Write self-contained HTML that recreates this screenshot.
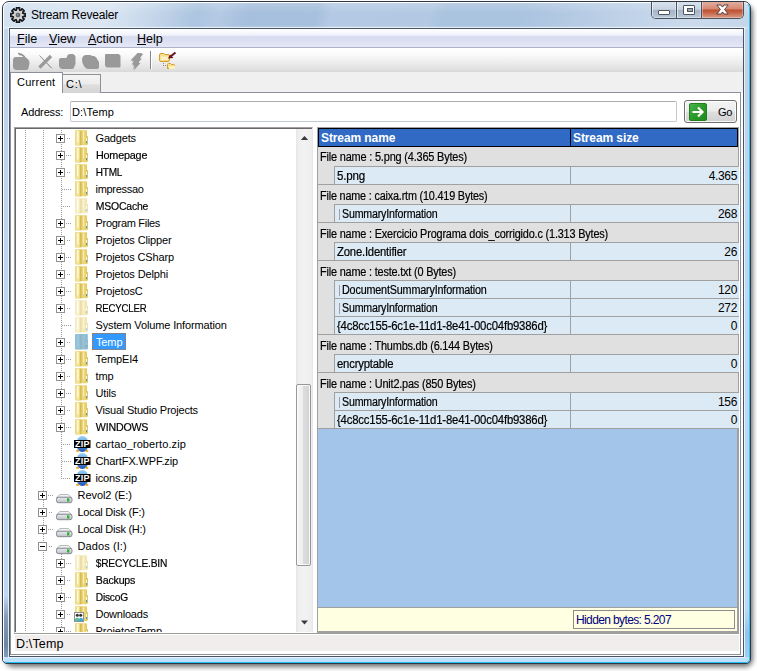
<!DOCTYPE html>
<html lang="en">
<head>
<meta charset="utf-8">
<title>Stream Revealer</title>
<style>
html,body{margin:0;padding:0;background:#fff;}
body{width:757px;height:671px;position:relative;overflow:hidden;font-family:"Liberation Sans",sans-serif;font-size:11px;color:#000;}
div,span,svg,i,b{position:absolute;box-sizing:border-box;}
svg{overflow:visible;}
#shadow{left:5px;top:5px;width:748px;height:662px;border-radius:8px;background:rgba(0,0,0,.55);filter:blur(2.5px);}
#win{left:2px;top:1px;width:749px;height:663px;border:1px solid #2f3846;border-radius:7px 7px 5px 5px;background:linear-gradient(180deg,#cbdcee 0px,#c3d5ea 27px,#bed2e9 60px,#bdd8f4 300px,#bdd8f4 600px,#bcdaf6 640px,#bfe0fb 656px,#bfe0fb 100%);overflow:hidden;}
#win .whl{left:0;top:0;right:0;bottom:0;border:1px solid #fff;border-right-color:#35c2f2;border-bottom-color:#25bdf0;border-radius:6px 6px 4px 4px;}
#titlegl{left:1px;top:1px;width:745px;height:26px;background:linear-gradient(180deg,rgba(255,255,255,.18) 0,rgba(255,255,255,0) 40%,rgba(255,255,255,0) 85%,rgba(255,255,255,.25) 100%),linear-gradient(105deg,#d3e1f0 0,#dbe6f2 14%,#c6d7eb 20%,#acc5e0 26%,#b4cae4 29%,#a6bfdd 33%,#a7c0dd 42%,#b4cae4 44%,#b3c9e3 57%,#aac3df 59%,#aac3df 69%,#c2d4e9 85%,#cbdbed 92%,#c4d6ea 100%);}
#client{left:9px;top:28px;width:735px;height:629px;border:1px solid #4a5564;background:#fff;}
#clienthl{left:8px;top:27px;width:737px;height:631px;border:1px solid rgba(236,243,250,.9);}
#title{left:31px;top:8px;font-size:12px;line-height:14px;white-space:nowrap;letter-spacing:-0.2px;}
/* menu */
#menu{left:10px;top:29px;width:733px;height:19px;background:linear-gradient(180deg,#ffffff 0,#f6f8fd 20%,#edf0fa 36%,#d7dcf0 40%,#dce0f2 70%,#e4e8f6 100%);border-bottom:1px solid #adb2ca;}
#menu span{top:3px;font-size:12.5px;line-height:15px;white-space:nowrap;}
#menu span u{text-decoration:underline;text-underline-offset:1px;text-decoration-thickness:1px;}
#tb{left:10px;top:48px;width:733px;height:24px;background:linear-gradient(180deg,#ffffff 0,#fbfbfb 25%,#efefef 55%,#e2e2e2 85%,#d9d9d9 100%);}
#tabbar{left:10px;top:72px;width:733px;height:21px;background:#f0f0f0;}
.tt{white-space:nowrap;line-height:14px;height:16px;padding:1px 0 0 4px;font-size:11px;}
.tt.sel{background:#3399ff;color:#fff;outline:1px dotted #c8702a;outline-offset:-1px;}
.vl{width:1px;background-image:linear-gradient(180deg,#9a9a9a 50%,transparent 50%);background-size:1px 2px;}
.hl{height:1px;background-image:linear-gradient(90deg,#9a9a9a 50%,transparent 50%);background-size:2px 1px;}
.bx{width:9px;height:9px;border:1px solid #919191;background:#fff;}
.bx i{left:1px;top:3px;width:5px;height:1px;background:#000;}
.bx b{left:3px;top:1px;width:1px;height:5px;background:#000;}
.ic{overflow:visible;}
.zt{font:bold 9px "Liberation Sans",sans-serif;fill:#fff;letter-spacing:0.2px;}
#tree{left:0;top:0;width:313px;height:632px;overflow:hidden;clip-path:inset(129px 0 0 16px);}
#treeborder{left:14px;top:127px;width:299px;height:506px;border:1px solid #a0a0a0;border-right-color:#e8e8e8;border-bottom-color:#fff;}
#treeborder2{left:15px;top:128px;width:297px;height:504px;border:1px solid #696969;border-right:0;border-bottom:0;}
#sb{left:296px;top:129px;width:16px;height:503px;background:linear-gradient(90deg,#e6e6e6 0,#f0f0f0 20%,#f2f2f2 60%,#ededed 100%);}
#thumb{left:0;top:255px;width:15px;height:182px;border:1px solid #979797;border-radius:2px;background:linear-gradient(90deg,#f5f5f5 0,#eeeeee 45%,#dcdcde 50%,#d3d3d6 100%);box-shadow:inset 0 0 0 1px rgba(255,255,255,.8);}
#grid{left:317px;top:0;width:422px;height:633px;}
.rf{left:0;width:421px;background:#e0e0e0;border-top:1px solid #a0a0a0;border-left:1px solid #a0a0a0;}
.rf span{left:2px;top:4px;font-size:12px;line-height:14px;white-space:nowrap;}
.rc{left:0;width:421px;background:#e0e0e0;border-left:1px solid #a0a0a0;}
.rc .c1{left:16px;top:0;width:236px;height:100%;background:#dbeaf5;border-top:1px solid #a0a0a0;border-left:1px solid #a0a0a0;}
.rc .c2{left:252px;top:0;width:169px;height:100%;background:#dbeaf5;border-top:1px solid #a0a0a0;border-left:1px solid #a0a0a0;}
.rc .c1 span{left:2px;top:2px;font-size:12px;line-height:14px;white-space:nowrap;}
.rc .c1 span.b{left:7px;}
.rc .c1 i.bar{left:4px;top:4px;width:1px;height:11px;background:#a59aa0;}
.rc .c2 span{right:2px;top:2px;font-size:12px;line-height:14px;white-space:nowrap;letter-spacing:-0.35px;}

#capbtns{left:651px;top:2px;width:93px;height:17px;border:1px solid #48525f;border-top:0;border-radius:0 0 5px 5px;overflow:hidden;background:#b8c6d8;}
#bmin{left:0;top:0;width:25px;height:16px;background:linear-gradient(180deg,#d9e3ee 0,#c6d2e1 46%,#a5b4c7 52%,#b9c7d8 100%);border-right:1px solid #48525f;box-shadow:inset 1px 0 0 rgba(255,255,255,.6),inset -1px -1px 0 rgba(255,255,255,.35);}
#bmin i{left:6px;top:8px;width:12px;height:5px;background:#fff;border:1px solid #4d5560;border-radius:1px;}
#bmax{left:25px;top:0;width:25px;height:16px;background:linear-gradient(180deg,#d9e3ee 0,#c6d2e1 46%,#a5b4c7 52%,#b9c7d8 100%);border-right:1px solid #48525f;box-shadow:inset 1px 0 0 rgba(255,255,255,.6),inset -1px -1px 0 rgba(255,255,255,.35);}
#bmax i{left:6px;top:3px;width:12px;height:10px;border:1px solid #4d5560;background:#fff;border-radius:1px;}
#bmax i:after{content:'';position:absolute;left:3px;top:2px;width:4px;height:2px;border:1px solid #4d5560;background:#9aa8ba;}
#bclose{left:50px;top:0;width:41px;height:16px;background:linear-gradient(180deg,#e2ae9f 0,#d78973 42%,#bf5334 50%,#c25c3e 62%,#d1836b 85%,#db9a86 100%);box-shadow:inset 1px 0 0 rgba(255,255,255,.35),inset -1px -1px 0 rgba(255,255,255,.3);}
#tab1{left:10px;top:72px;width:53px;height:21px;background:#fff;border:1px solid #8c909b;border-bottom:0;}
#tab1 span{left:6px;top:3px;font-size:11px;line-height:13px;letter-spacing:.25px;}
#tab2{left:62px;top:74px;width:39px;height:19px;border:1px solid #8e9096;border-bottom:0;background:linear-gradient(180deg,#f4f4f4 0,#ececec 50%,#dedede 55%,#d4d4d4 100%);}
#tab2 span{left:3px;top:3px;font-size:11px;line-height:13px;letter-spacing:.8px;}
#page{left:10px;top:92px;width:731px;height:563px;border:1px solid #8c909b;background:#fff;}
#addrlbl{left:21px;top:106px;font-size:11px;line-height:13px;letter-spacing:-0.15px;}
#addr{left:70px;top:101px;width:607px;height:21px;border:1px solid #c3c9d3;border-top-color:#abadb3;border-radius:2px;background:#fff;}
#addr span{left:1px;top:4px;font-size:11px;line-height:13px;letter-spacing:.15px;}
#go{left:684px;top:100px;width:53px;height:23px;border:1px solid #707070;border-radius:3px;background:linear-gradient(180deg,#f3f3f3 0,#ececec 48%,#dedede 52%,#d1d1d1 100%);box-shadow:inset 0 0 0 1px rgba(255,255,255,.8);}
#go span{left:33px;top:5px;font-size:11px;line-height:13px;letter-spacing:-0.4px;}
#gridbg{left:317px;top:127px;width:422px;height:506px;background:#a3c5ea;border:1px solid #a0a0a0;border-right-width:2px;border-bottom-width:2px;}
#ghead{left:318px;top:128px;width:420px;height:19px;background:#316ac5;border:1px solid #000;}
#ghead span{top:2px;color:#fff;font-weight:bold;font-size:12px;line-height:14px;white-space:nowrap;letter-spacing:-0.1px;}
#ghead i{left:251px;top:0;width:1px;height:17px;background:#000;}
#gfoot{left:318px;top:607px;width:419px;height:24px;background:#ffffe1;border-top:1px solid #a0a0a0;}
#hb{left:255px;top:2px;width:162px;height:19px;border:1px solid #8c8c8c;}
#hb span{left:2px;top:2px;font-size:12px;line-height:14px;white-space:nowrap;letter-spacing:-0.62px;color:#000080;}
#status{left:15px;top:635px;width:724px;height:16px;background:#f0edec;}
#statline{left:14px;top:633px;width:725px;height:1px;background:#9c9c9c;}
#status span{left:1px;top:2px;font-size:12.5px;line-height:14px;letter-spacing:.15px;}
.rend{left:0;width:421px;height:1px;background:#a0a0a0;}
#lfd{left:4px;top:596px;width:5px;height:61px;background:linear-gradient(180deg,rgba(112,136,164,0) 0,rgba(112,136,164,.75) 35%,#6c86a2 80%,#7f9dbb 100%);}
#rfd{left:745px;top:610px;width:4px;height:47px;background:linear-gradient(180deg,rgba(143,192,234,0) 0,#93c2ea 50%,#9fd0f4 100%);}
</style>
</head>
<body>
<svg width="0" height="0" style="left:-10px;top:-10px">
<defs>
<linearGradient id="gf" x1="0" y1="0" x2="1" y2="0"><stop offset="0" stop-color="#f3e7a4"/><stop offset=".45" stop-color="#efdf8e"/><stop offset=".5" stop-color="#dcc566"/><stop offset="1" stop-color="#ecd778"/></linearGradient>
<linearGradient id="gfl" x1="0" y1="0" x2="1" y2="0"><stop offset="0" stop-color="#ecd880"/><stop offset=".5" stop-color="#f3e6a0"/><stop offset="1" stop-color="#e5cc64"/></linearGradient>
<linearGradient id="gfr" x1="0" y1="0" x2="1" y2="0"><stop offset="0" stop-color="#dbbf56"/><stop offset=".4" stop-color="#eedb80"/><stop offset="1" stop-color="#e3c860"/></linearGradient>
<g id="foldf">
 <rect x="1" y="0" width="6" height="15.700" rx="1" fill="url(#gfl)"/>
 <rect x="6.500" y=".3" width="6.500" height="15" rx="1" fill="url(#gfr)"/>
 <rect x="12.500" y="6" width="1.500" height="8.500" rx=".5" fill="#dfc45c"/>
 <rect x="3" y="1" width="1.600" height="11.500" rx=".6" fill="#fffbe6" opacity=".9"/>
 <rect x="9" y="1.500" width="1.200" height="10" rx=".5" fill="#fbf3c8" opacity=".75"/>
 <rect x="6.300" y=".8" width=".9" height="14.400" fill="#cfb552" opacity=".85"/>
 <rect x="12" y="8" width="1" height="3" fill="#fdfdf5"/>
 <rect x="12" y="11" width="1" height="2" fill="#3f9be0"/>
</g>
<g id="foldh" opacity=".5"><use href="#foldf"/></g>
<g id="folds">
 <use href="#foldf"/>
 <rect x="1" y="0" width="13" height="15.500" rx="1" fill="#6db4f2" opacity=".7"/>
</g>
<g id="foldw">
 <use href="#foldf"/>
 <rect x=".5" y="6.500" width="9" height="9" fill="#fdfdfd" stroke="#8e9298" stroke-width="1"/>
 <circle cx="3.300" cy="9.300" r="1.500" fill="#3a3026"/>
 <circle cx="6.700" cy="9.300" r="1.500" fill="#3a3026"/>
 <path d="M1 15 L1 13 Q3.300 10.500 5.200 13 L5.200 15 Z" fill="#5cc08c"/>
 <path d="M5 15 L5 13 Q6.800 10.500 9 13 L9 15 Z" fill="#3aa8e4"/>
</g>
<linearGradient id="gz" x1="0" y1="0" x2="0" y2="1"><stop offset="0" stop-color="#9fd0f2"/><stop offset=".45" stop-color="#5aa0e0"/><stop offset="1" stop-color="#1d55b8"/></linearGradient>
<g id="zipi">
 <ellipse cx="8.400" cy="8" rx="6.100" ry="8" fill="url(#gz)"/>
 <rect x="2.3" y="13.8" width="2.6" height="2" fill="#f0a020"/>
 <rect x="11.6" y="13.8" width="2.6" height="2" fill="#f0a020"/>
 <rect x="0" y="4" width="16.5" height="8" fill="#000"/>
</g>
<linearGradient id="gd" x1="0" y1="0" x2="0" y2="1"><stop offset="0" stop-color="#e8eaee"/><stop offset=".5" stop-color="#d4d7de"/><stop offset="1" stop-color="#b9bcc4"/></linearGradient>
<g id="drv">
 <path d="M4 7.500 L12.500 7.500 L15.500 10.500 L0.500 10.500 Z" fill="#f1f2f4" stroke="#a8aaae" stroke-width=".8"/>
 <rect x=".5" y="10.200" width="15.500" height="5.500" rx="2" fill="url(#gd)" stroke="#85888e" stroke-width="1"/>
 <rect x="11" y="11.300" width="2.400" height="3.200" fill="#38b038"/>
</g>
</defs>
</svg>
<div id="shadow"></div>
<div id="win"><div id="titlegl"></div><div class="whl"></div></div>
<div id="lfd"></div><div id="rfd"></div>
<div id="clienthl"></div>
<div id="client"></div>
<!-- title bar -->
<svg id="appicon" style="left:10px;top:7px" width="16" height="16" viewBox="0 0 16 16">
 <g transform="translate(8 8)">
  <g fill="#15181d">
   <rect x="-2.300" y="-8" width="4.600" height="16" rx=".5"/>
   <rect x="-2.300" y="-8" width="4.600" height="16" rx=".5" transform="rotate(45)"/>
   <rect x="-2.300" y="-8" width="4.600" height="16" rx=".5" transform="rotate(90)"/>
   <rect x="-2.300" y="-8" width="4.600" height="16" rx=".5" transform="rotate(135)"/>
   <circle r="5.600"/>
  </g>
  <polygon points="0.00,-6.90 1.49,-3.60 4.88,-4.88 3.60,-1.49 6.90,0.00 3.60,1.49 4.88,4.88 1.49,3.60 0.00,6.90 -1.49,3.60 -4.88,4.88 -3.60,1.49 -6.90,0.00 -3.60,-1.49 -4.88,-4.88 -1.49,-3.60" fill="#dedcda"/>
  <circle r="4" fill="#cfcdcb"/>
  <circle r="2.300" fill="#5d626a"/>
  <circle r="1" cx="-.3" cy="-.3" fill="#8e949c"/>
 </g>
</svg>
<span id="title">Stream Revealer</span>
<!-- caption buttons -->
<div id="capbtns">
 <div id="bmin"><i></i></div>
 <div id="bmax"><i></i></div>
 <div id="bclose"><svg width="13" height="11" viewBox="0 0 13 11" style="left:14px;top:2px"><path d="M.8 1 L4.9 1 L6.5 3.1 L8.1 1 L12.2 1 L8.6 5.500 L12.2 10 L8.1 10 L6.5 7.900 L4.900 10 L.8 10 L4.400 5.500 Z" fill="#fff" stroke="#5c3f3c" stroke-width="1" stroke-linejoin="round"/></svg></div>
</div>
<!-- menu -->
<div id="menu">
 <span style="left:7px"><u>F</u>ile</span>
 <span style="left:39px"><u>V</u>iew</span>
 <span style="left:78px"><u>A</u>ction</span>
 <span style="left:127px"><u>H</u>elp</span>
</div>
<!-- toolbar -->
<div id="tb">
 <svg width="180" height="24" viewBox="0 0 180 24" style="left:0;top:0">
  <g fill="#fff" stroke="#fff" transform="translate(1 1)">
   <use href="#tbicons"/>
  </g>
  <g id="tbicons" fill="#999" stroke="#999">
   <path stroke="none" d="M3 12 Q3 9 6 9 L13 9 Q18.5 9.500 18.5 14 L17.5 19 Q17 21 15.500 21 L5 21 Q3 21 3 19 Z"/>
   <path fill="none" stroke-width="1.5" d="M8 5.500 Q13.500 5.500 15 11"/>
   <path fill="none" stroke-width="1.8" d="M29 19 L40.500 7.500"/>
   <path fill="none" stroke-width="1" d="M29.500 7.500 L41 19.500"/>
   <path stroke="none" d="M49 12 Q49 10 51 10 L55.500 10 Q57 10 57 8.500 L57 8 Q58 6 60 6 L62.500 6 Q64.500 6 64.500 8 L64.500 15 L63 18.500 Q62.500 20 61 20 L51 20 Q49 20 49 18 Z"/>
   <path stroke="none" d="M72 12 Q72 7 76.500 7 L79.500 7 Q81.500 7 82 8 L84 8 Q86 8.500 86.500 11 L88 13 L88 18 Q88 20 86 20 L77 20 Q75 20 74 18 Q72 15 72 12 Z"/>
   <rect stroke="none" x="95" y="6" width="14.500" height="12.500" rx="1"/>
   <path stroke="none" d="M127.500 5 L132.200 5 L128.500 9.500 L131 9.500 L126.800 14 L129.500 14 L122.800 21.500 L124.500 16.500 L121.500 16.500 L124.500 12.500 L120.500 12.500 Z"/>
  </g>
  <rect x="140" y="3" width="1" height="18" fill="#858585"/>
  <rect x="141" y="3" width="1" height="18" fill="#fff"/>
  <!-- folder copy icon -->
  <g>
   <path d="M149.500 7 Q149.500 5.500 151 5.500 L154 5.500 L155 6.500 L158 6.500 Q159.500 6.500 159.500 8 L159.500 12 Q159.500 13.500 158 13.500 L151 13.500 Q149.500 13.500 149.500 12 Z" fill="#f7df8c" stroke="#d89a28" stroke-width="1"/>
   <rect x="151" y="8.500" width="7" height="3.500" fill="#fdf2bf"/>
   <path d="M157.500 16.500 Q157.500 15.500 158.500 15.500 L160.500 15.500 L161.500 16.500 L163.500 16.500 Q164.500 16.500 164.500 17.500 L164.500 20.500 L157.500 20.500 Z" fill="#f7df8c" stroke="#d89a28" stroke-width="1"/>
   <rect x="159" y="18" width="6" height="3" fill="#fdf2bf"/>
   <path d="M165.500 4.500 L160 9" stroke="#6e1028" stroke-width="2" fill="none"/>
   <path d="M158 10.600 L163.500 10 L160 6.500 Z" fill="#6e1028"/>
   <rect x="153" y="15" width="1" height="1" fill="#888"/>
   <rect x="153" y="17" width="1" height="1" fill="#888"/><rect x="155" y="17" width="1" height="1" fill="#888"/>
  </g>
 </svg>
</div>
<!-- tabs -->
<div id="tabbar"></div>
<div id="page"></div>
<div id="tab2"><span>C:\</span></div>
<div id="tab1"><span>Current</span></div>
<!-- address row -->
<span id="addrlbl">Address:</span>
<div id="addr"><span>D:\Temp</span></div>
<div id="go">
 <svg width="18" height="18" viewBox="0 0 18 18" style="left:4px;top:2px">
  <defs><linearGradient id="gg" x1="0" y1="0" x2="1" y2="1"><stop offset="0" stop-color="#4db54d"/><stop offset=".5" stop-color="#2a9a2a"/><stop offset="1" stop-color="#1f8a1f"/></linearGradient></defs>
  <rect x=".5" y=".5" width="17" height="17" rx="1.5" fill="url(#gg)" stroke="#1f7f1f"/>
  <path d="M3.500 9 L13 9 M9 4.500 L13.500 9 L9 13.500" fill="none" stroke="#fff" stroke-width="2.200"/>
 </svg>
 <span>Go</span>
</div>
<!-- tree panel -->
<div id="treeborder"></div>
<div id="treeborder2"></div>
<div id="sb">
 <svg width="17" height="17" style="left:0;top:0"><path d="M4.800 11 L8.500 7 L12.200 11 Z" fill="#3a3a3a"/></svg>
 <div id="thumb"></div>
 <svg width="17" height="17" style="left:0;top:486px"><path d="M5 5.500 L8.500 9.500 L12 5.500 Z" fill="#3a3a3a"/></svg>
</div>
<!-- grid frame -->
<div id="gridbg"></div>
<div id="ghead"><span style="left:2px">Stream name</span><i></i><span style="left:254px">Stream size</span></div>
<div id="gfoot"><div id="hb"><span>Hidden bytes: 5.207</span></div></div>
<!-- status bar -->
<div id="statline"></div>
<div id="status"><span>D:\Temp</span></div>
<div id="tree">
<div class="vl" style="left:25px;top:130px;height:502px"></div>
<div class="vl" style="left:43px;top:130px;height:502px"></div>
<div class="vl" style="left:61px;top:130px;height:349px"></div>
<div class="vl" style="left:61px;top:548px;height:84px"></div>
<div class="hl" style="left:67px;top:138px;width:4px"></div>
<div class="bx" style="left:56px;top:134px"><i></i><b></b></div>
<svg class="ic" style="left:74px;top:130px" width="16" height="16"><use href="#foldf"/></svg>
<span class="tt" style="left:91.5px;top:130px;letter-spacing:-0.18px;">Gadgets</span>
<div class="hl" style="left:66px;top:155px;width:5px"></div>
<div class="bx" style="left:56px;top:151px"><i></i><b></b></div>
<svg class="ic" style="left:74px;top:147px" width="16" height="16"><use href="#foldf"/></svg>
<span class="tt" style="left:91.5px;top:147px;letter-spacing:-0.2px;transform:scaleX(0.9822);transform-origin:0 0;-webkit-text-stroke:.2px;">Homepage</span>
<div class="hl" style="left:67px;top:172px;width:4px"></div>
<div class="bx" style="left:56px;top:168px"><i></i><b></b></div>
<svg class="ic" style="left:74px;top:164px" width="16" height="16"><use href="#foldf"/></svg>
<span class="tt" style="left:91.5px;top:164px;letter-spacing:-0.2px;transform:scaleX(0.9124);transform-origin:0 0;-webkit-text-stroke:.2px;">HTML</span>
<div class="hl" style="left:62px;top:189px;width:9px"></div>
<svg class="ic" style="left:74px;top:181px" width="16" height="16"><use href="#foldf"/></svg>
<span class="tt" style="left:91.5px;top:181px;letter-spacing:-0.29px;">impressao</span>
<div class="hl" style="left:63px;top:206px;width:8px"></div>
<svg class="ic" style="left:74px;top:198px" width="16" height="16"><use href="#foldh"/></svg>
<span class="tt" style="left:91.5px;top:198px;letter-spacing:-0.2px;transform:scaleX(0.9483);transform-origin:0 0;-webkit-text-stroke:.2px;">MSOCache</span>
<div class="hl" style="left:66px;top:223px;width:5px"></div>
<div class="bx" style="left:56px;top:219px"><i></i><b></b></div>
<svg class="ic" style="left:74px;top:215px" width="16" height="16"><use href="#foldf"/></svg>
<span class="tt" style="left:91.5px;top:215px;letter-spacing:-0.30px;">Program Files</span>
<div class="hl" style="left:67px;top:240px;width:4px"></div>
<div class="bx" style="left:56px;top:236px"><i></i><b></b></div>
<svg class="ic" style="left:74px;top:232px" width="16" height="16"><use href="#foldf"/></svg>
<span class="tt" style="left:91.5px;top:232px;letter-spacing:-0.14px;">Projetos Clipper</span>
<div class="hl" style="left:66px;top:257px;width:5px"></div>
<div class="bx" style="left:56px;top:253px"><i></i><b></b></div>
<svg class="ic" style="left:74px;top:249px" width="16" height="16"><use href="#foldf"/></svg>
<span class="tt" style="left:91.5px;top:249px;letter-spacing:-0.15px;">Projetos CSharp</span>
<div class="hl" style="left:67px;top:274px;width:4px"></div>
<div class="bx" style="left:56px;top:270px"><i></i><b></b></div>
<svg class="ic" style="left:74px;top:266px" width="16" height="16"><use href="#foldf"/></svg>
<span class="tt" style="left:91.5px;top:266px;letter-spacing:-0.14px;">Projetos Delphi</span>
<div class="hl" style="left:66px;top:291px;width:5px"></div>
<div class="bx" style="left:56px;top:287px"><i></i><b></b></div>
<svg class="ic" style="left:74px;top:283px" width="16" height="16"><use href="#foldf"/></svg>
<span class="tt" style="left:91.5px;top:283px;letter-spacing:-0.13px;">ProjetosC</span>
<div class="hl" style="left:67px;top:308px;width:4px"></div>
<div class="bx" style="left:56px;top:304px"><i></i><b></b></div>
<svg class="ic" style="left:74px;top:300px" width="16" height="16"><use href="#foldh"/></svg>
<span class="tt" style="left:91.5px;top:300px;letter-spacing:-0.2px;transform:scaleX(0.8730);transform-origin:0 0;-webkit-text-stroke:.2px;">RECYCLER</span>
<div class="hl" style="left:62px;top:325px;width:9px"></div>
<svg class="ic" style="left:74px;top:317px" width="16" height="16"><use href="#foldh"/></svg>
<span class="tt" style="left:91.5px;top:317px;letter-spacing:-0.13px;">System Volume Information</span>
<div class="hl" style="left:67px;top:342px;width:4px"></div>
<div class="bx" style="left:56px;top:338px"><i></i><b></b></div>
<svg class="ic" style="left:74px;top:334px" width="16" height="16"><use href="#folds"/></svg>
<span class="tt sel" style="left:92px;top:333px;width:34px;height:17px;padding-top:2px;letter-spacing:-0.13px;">Temp</span>
<div class="hl" style="left:66px;top:359px;width:5px"></div>
<div class="bx" style="left:56px;top:355px"><i></i><b></b></div>
<svg class="ic" style="left:74px;top:351px" width="16" height="16"><use href="#foldf"/></svg>
<span class="tt" style="left:91.5px;top:351px;letter-spacing:-0.12px;">TempEI4</span>
<div class="hl" style="left:67px;top:376px;width:4px"></div>
<div class="bx" style="left:56px;top:372px"><i></i><b></b></div>
<svg class="ic" style="left:74px;top:368px" width="16" height="16"><use href="#foldf"/></svg>
<span class="tt" style="left:91.5px;top:368px;letter-spacing:-0.11px;">tmp</span>
<div class="hl" style="left:66px;top:393px;width:5px"></div>
<div class="bx" style="left:56px;top:389px"><i></i><b></b></div>
<svg class="ic" style="left:74px;top:385px" width="16" height="16"><use href="#foldf"/></svg>
<span class="tt" style="left:91.5px;top:385px;letter-spacing:-0.14px;">Utils</span>
<div class="hl" style="left:67px;top:410px;width:4px"></div>
<div class="bx" style="left:56px;top:406px"><i></i><b></b></div>
<svg class="ic" style="left:74px;top:402px" width="16" height="16"><use href="#foldf"/></svg>
<span class="tt" style="left:91.5px;top:402px;letter-spacing:-0.20px;">Visual Studio Projects</span>
<div class="hl" style="left:66px;top:427px;width:5px"></div>
<div class="bx" style="left:56px;top:423px"><i></i><b></b></div>
<svg class="ic" style="left:74px;top:419px" width="16" height="16"><use href="#foldf"/></svg>
<span class="tt" style="left:91.5px;top:419px;letter-spacing:-0.2px;transform:scaleX(0.9666);transform-origin:0 0;-webkit-text-stroke:.2px;">WINDOWS</span>
<div class="hl" style="left:63px;top:444px;width:8px"></div>
<svg class="ic" style="left:74px;top:436px" width="17" height="16"><use href="#zipi"/><text x="8.3" y="11" text-anchor="middle" class="zt">ZIP</text></svg>
<span class="tt" style="left:91.5px;top:436px;letter-spacing:0.10px;">cartao_roberto.zip</span>
<div class="hl" style="left:62px;top:461px;width:9px"></div>
<svg class="ic" style="left:74px;top:453px" width="17" height="16"><use href="#zipi"/><text x="8.3" y="11" text-anchor="middle" class="zt">ZIP</text></svg>
<span class="tt" style="left:91.5px;top:453px;letter-spacing:-0.12px;">ChartFX.WPF.zip</span>
<div class="hl" style="left:63px;top:478px;width:8px"></div>
<svg class="ic" style="left:74px;top:470px" width="17" height="16"><use href="#zipi"/><text x="8.3" y="11" text-anchor="middle" class="zt">ZIP</text></svg>
<span class="tt" style="left:91.5px;top:470px;letter-spacing:-0.16px;">icons.zip</span>
<div class="hl" style="left:48px;top:495px;width:5px"></div>
<div class="bx" style="left:38px;top:491px"><i></i><b></b></div>
<svg class="ic" style="left:56px;top:487px" width="17" height="16"><use href="#drv"/></svg>
<span class="tt" style="left:73.5px;top:487px;letter-spacing:-0.05px;">Revol2 (E:)</span>
<div class="hl" style="left:49px;top:512px;width:4px"></div>
<div class="bx" style="left:38px;top:508px"><i></i><b></b></div>
<svg class="ic" style="left:56px;top:504px" width="17" height="16"><use href="#drv"/></svg>
<span class="tt" style="left:73.5px;top:504px;letter-spacing:-0.25px;">Local Disk (F:)</span>
<div class="hl" style="left:48px;top:529px;width:5px"></div>
<div class="bx" style="left:38px;top:525px"><i></i><b></b></div>
<svg class="ic" style="left:56px;top:521px" width="17" height="16"><use href="#drv"/></svg>
<span class="tt" style="left:73.5px;top:521px;letter-spacing:-0.26px;">Local Disk (H:)</span>
<div class="hl" style="left:49px;top:546px;width:4px"></div>
<div class="bx" style="left:38px;top:542px"><i></i></div>
<svg class="ic" style="left:56px;top:538px" width="17" height="16"><use href="#drv"/></svg>
<span class="tt" style="left:73.5px;top:538px;letter-spacing:0.09px;">Dados (I:)</span>
<div class="hl" style="left:66px;top:563px;width:5px"></div>
<div class="bx" style="left:56px;top:559px"><i></i><b></b></div>
<svg class="ic" style="left:74px;top:555px" width="16" height="16"><use href="#foldh"/></svg>
<span class="tt" style="left:91.5px;top:555px;letter-spacing:-0.2px;transform:scaleX(0.9263);transform-origin:0 0;-webkit-text-stroke:.2px;">$RECYCLE.BIN</span>
<div class="hl" style="left:67px;top:580px;width:4px"></div>
<div class="bx" style="left:56px;top:576px"><i></i><b></b></div>
<svg class="ic" style="left:74px;top:572px" width="16" height="16"><use href="#foldf"/></svg>
<span class="tt" style="left:91.5px;top:572px;letter-spacing:-0.2px;transform:scaleX(0.9632);transform-origin:0 0;-webkit-text-stroke:.2px;">Backups</span>
<div class="hl" style="left:66px;top:597px;width:5px"></div>
<div class="bx" style="left:56px;top:593px"><i></i><b></b></div>
<svg class="ic" style="left:74px;top:589px" width="16" height="16"><use href="#foldf"/></svg>
<span class="tt" style="left:91.5px;top:589px;letter-spacing:-0.2px;transform:scaleX(0.9265);transform-origin:0 0;-webkit-text-stroke:.2px;">DiscoG</span>
<div class="hl" style="left:67px;top:614px;width:4px"></div>
<div class="bx" style="left:56px;top:610px"><i></i><b></b></div>
<svg class="ic" style="left:74px;top:606px" width="16" height="16"><use href="#foldw"/></svg>
<span class="tt" style="left:91.5px;top:606px;letter-spacing:-0.22px;">Downloads</span>
<div class="hl" style="left:66px;top:631px;width:5px"></div>
<div class="bx" style="left:56px;top:627px"><i></i><b></b></div>
<svg class="ic" style="left:74px;top:623px" width="16" height="16"><use href="#foldf"/></svg>
<span class="tt" style="left:91.5px;top:623px;letter-spacing:-0.06px;">ProjetosTemp</span>
</div>
<div id="grid">
<div class="rf" style="top:147px;height:19px;border-top:0"><span style="top:3px;letter-spacing:-0.2px;transform:scaleX(0.9118);transform-origin:0 0;-webkit-text-stroke:.2px;">File name : 5.png (4.365 Bytes)</span></div>
<div class="rc" style="top:166px;height:18px"><div class="c1"><span style="letter-spacing:-0.2px;transform:scaleX(0.9645);transform-origin:0 0;-webkit-text-stroke:.2px;">5.png</span></div><div class="c2"><span>4.365</span></div></div>
<div class="rf" style="top:184px;height:20px"><span style="letter-spacing:-0.2px;transform:scaleX(0.9027);transform-origin:0 0;-webkit-text-stroke:.2px;">File name : caixa.rtm (10.419 Bytes)</span></div>
<div class="rc" style="top:204px;height:18px"><div class="c1"><i class="bar"></i><span class=b style="letter-spacing:-0.2px;transform:scaleX(0.8861);transform-origin:0 0;-webkit-text-stroke:.2px;">SummaryInformation</span></div><div class="c2"><span>268</span></div></div>
<div class="rf" style="top:222px;height:20px"><span style="letter-spacing:-0.2px;transform:scaleX(0.9077);transform-origin:0 0;-webkit-text-stroke:.2px;">File name : Exercicio Programa dois_corrigido.c (1.313 Bytes)</span></div>
<div class="rc" style="top:242px;height:18px"><div class="c1"><span style="letter-spacing:-0.2px;transform:scaleX(0.9401);transform-origin:0 0;-webkit-text-stroke:.2px;">Zone.Identifier</span></div><div class="c2"><span>26</span></div></div>
<div class="rf" style="top:260px;height:20px"><span style="letter-spacing:-0.2px;transform:scaleX(0.9068);transform-origin:0 0;-webkit-text-stroke:.2px;">File name : teste.txt (0 Bytes)</span></div>
<div class="rc" style="top:280px;height:18px"><div class="c1"><i class="bar"></i><span class=b style="letter-spacing:-0.2px;transform:scaleX(0.8995);transform-origin:0 0;-webkit-text-stroke:.2px;">DocumentSummaryInformation</span></div><div class="c2"><span>120</span></div></div>
<div class="rc" style="top:298px;height:18px"><div class="c1"><i class="bar"></i><span class=b style="letter-spacing:-0.2px;transform:scaleX(0.8861);transform-origin:0 0;-webkit-text-stroke:.2px;">SummaryInformation</span></div><div class="c2"><span>272</span></div></div>
<div class="rc" style="top:316px;height:18px"><div class="c1"><span style="letter-spacing:-0.2px;transform:scaleX(0.9453);transform-origin:0 0;-webkit-text-stroke:.2px;">{4c8cc155-6c1e-11d1-8e41-00c04fb9386d}</span></div><div class="c2"><span>0</span></div></div>
<div class="rf" style="top:334px;height:20px"><span style="letter-spacing:-0.2px;transform:scaleX(0.9075);transform-origin:0 0;-webkit-text-stroke:.2px;">File name : Thumbs.db (6.144 Bytes)</span></div>
<div class="rc" style="top:354px;height:18px"><div class="c1"><span style="letter-spacing:-0.2px;transform:scaleX(0.9424);transform-origin:0 0;-webkit-text-stroke:.2px;">encryptable</span></div><div class="c2"><span>0</span></div></div>
<div class="rf" style="top:372px;height:20px"><span style="letter-spacing:-0.2px;transform:scaleX(0.9080);transform-origin:0 0;-webkit-text-stroke:.2px;">File name : Unit2.pas (850 Bytes)</span></div>
<div class="rc" style="top:392px;height:18px"><div class="c1"><i class="bar"></i><span class=b style="letter-spacing:-0.2px;transform:scaleX(0.8861);transform-origin:0 0;-webkit-text-stroke:.2px;">SummaryInformation</span></div><div class="c2"><span>156</span></div></div>
<div class="rc" style="top:410px;height:18px"><div class="c1"><span style="letter-spacing:-0.2px;transform:scaleX(0.9453);transform-origin:0 0;-webkit-text-stroke:.2px;">{4c8cc155-6c1e-11d1-8e41-00c04fb9386d}</span></div><div class="c2"><span>0</span></div></div>
<div class="rend" style="top:428px"></div>
</div>
</body>
</html>
